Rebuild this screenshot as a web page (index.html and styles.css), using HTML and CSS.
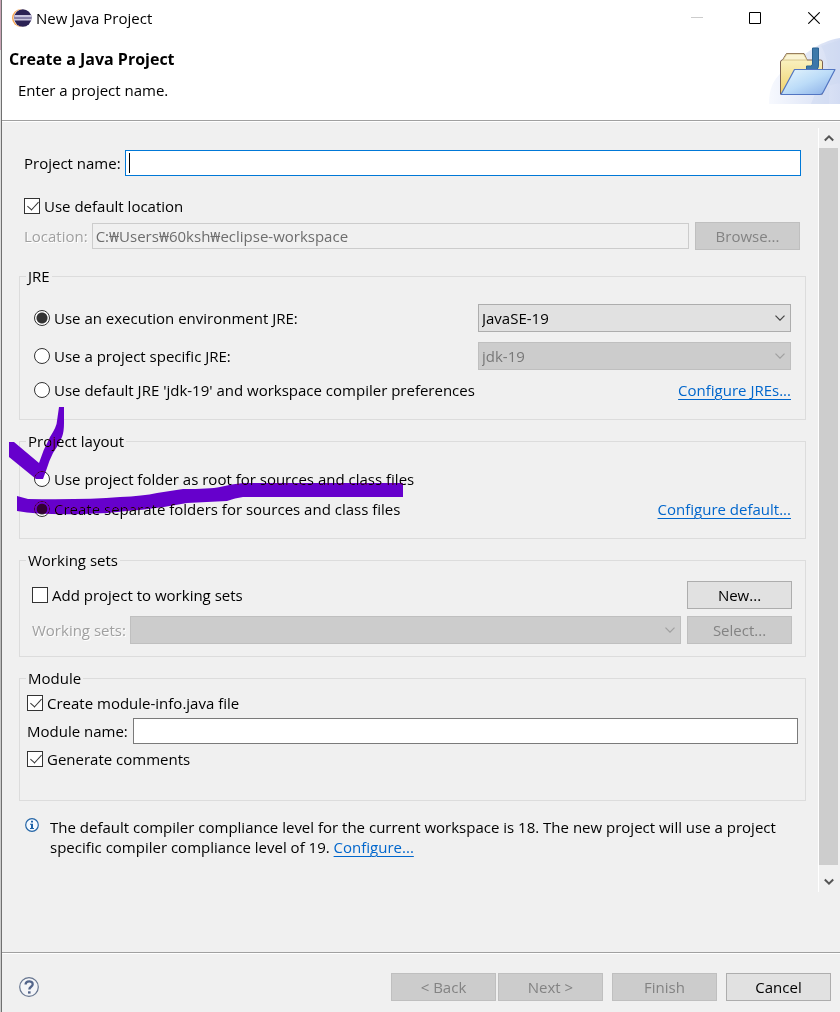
FILE: index.html
```html
<!DOCTYPE html>
<html lang="en">
<head>
  <meta charset="UTF-8" />
  <meta name="viewport" content="width=device-width, initial-scale=1" />
  <title>New Java Project</title>
  <link rel="stylesheet" href="styles.css">
</head>
<body>

  <div class="dialog">
    <div class="titlebar">
      <svg class="logo" width="20" height="20" viewBox="0 0 20 20">
        <circle cx="9" cy="10" r="9" fill="#f7a550" />
        <circle cx="10.500" cy="10" r="9" fill="#fff" />
        <circle cx="10.800" cy="10" r="8.700" fill="#2c2255" />
        <path d="M2.300 8h17M2 11.500h17.500" stroke="#c9c4de" stroke-width="1.800" />
        <path d="M2 9.800h17.500" stroke="#8c85b0" stroke-width="1.500" />
      </svg>
      <span class="window-title">New Java Project</span>
      <div class="window-buttons">
        <button aria-label="Minimize" disabled>
          <svg width="12" height="12" viewBox="0 0 12 12"><path d="M0 5.500h12" stroke="#ccc" /></svg>
        </button>
        <button aria-label="Maximize">
          <svg width="12" height="12" viewBox="0 0 12 12"><path d="M.5.5h11v11H.5z" fill="none" stroke="#000" /></svg>
        </button>
        <button aria-label="Close">
          <svg width="12" height="12" viewBox="0 0 12 12"><path d="M.3.3l11.400 11.400M11.700.3L.3 11.700" stroke="#000" stroke-width="1.100" /></svg>
        </button>
      </div>
    </div>

    <header class="header">
      <div>
        <h1>Create a Java Project</h1>
        <p>Enter a project name.</p>
      </div>
      <svg class="banner" width="71" height="68" viewBox="0 0 71 68">
        <defs>
          <linearGradient id="glow" x1="0" x2="1"><stop offset="0" stop-color="#f7f9fe" /><stop offset="1" stop-color="#d3dcf3" /></linearGradient>
          <linearGradient id="back" x1="0" y1="0" x2="0" y2="1"><stop offset="0" stop-color="#fbf6cf" /><stop offset="1" stop-color="#f0d26a" /></linearGradient>
          <linearGradient id="front" x1="0" y1="0" x2="1" y2="1"><stop offset="0" stop-color="#e8f6fd" /><stop offset=".5" stop-color="#bcdcf8" /><stop offset="1" stop-color="#86abe6" /></linearGradient>
        </defs>
        <path d="M0 68C0 48 8 38 22 30C36 18 48 6 71 2V68z" fill="url(#glow)" />
        <path d="M52 10Q62 24 60 68H71V4zM46 58Q60 48 71 47V68H42z" fill="#cbd6f1" opacity=".4" />
        <path d="M11.500 58V26q0-2 2-2l4-6.500h17.500l3 6.500h13.500q2 0 2 2v32z" fill="url(#back)" stroke="#7e6250" />
        <path d="M14 24l4-6h16.500l3.500 6z" fill="#faf4d4" stroke="#c8b475" stroke-width=".7" />
        <path d="M43.500 12h6v17q0 6-6 6h-6v-5h4q2 0 2-2z" fill="#3d78aa" stroke="#2b6291" />
        <path d="M25.500 33.500h40.500l-12 23q-1 2-3 2H12z" fill="url(#front)" stroke="#5275c2" stroke-width="1.200" stroke-linejoin="round" />
      </svg>
    </header>

    <main class="content">
      <form class="form">
        <div class="row project-name">
          <label for="projectName">Project name:</label>
          <input type="text" id="projectName" class="active" />
        </div>
        <label class="option default-location"><input type="checkbox" checked /> Use default location</label>
        <div class="row location">
          <label for="location" class="disabled">Location:</label>
          <input type="text" id="location" value="C:₩Users₩60ksh₩eclipse-workspace" disabled />
          <button type="button" class="button" disabled>Browse...</button>
        </div>

        <fieldset class="spaced">
          <legend>JRE</legend>
          <div class="row">
            <label class="option"><input type="radio" name="jre" checked /> Use an execution environment JRE:</label>
            <div class="select jre-select">
              <select aria-label="Execution environment"><option>JavaSE-19</option></select>
              <svg width="10" height="6" viewBox="0 0 10 6"><path d="M.5.7L5 5.200 9.500.7" /></svg>
            </div>
          </div>
          <div class="row">
            <label class="option"><input type="radio" name="jre" /> Use a project specific JRE:</label>
            <div class="select jre-select">
              <select aria-label="Project JRE" disabled><option>jdk-19</option></select>
              <svg width="10" height="6" viewBox="0 0 10 6"><path d="M.5.7L5 5.200 9.500.7" /></svg>
            </div>
          </div>
          <div class="row">
            <label class="option"><input type="radio" name="jre" /> Use default JRE 'jdk-19' and workspace compiler preferences</label>
            <a href="#">Configure JREs...</a>
          </div>
        </fieldset>

        <fieldset class="spaced marked">
          <legend>Project layout</legend>
          <div class="row">
            <label class="option"><input type="radio" name="layout" /> Use project folder as root for sources and class files</label>
          </div>
          <div class="row">
            <label class="option"><input type="radio" name="layout" checked /> Create separate folders for sources and class files</label>
            <a href="#">Configure default...</a>
          </div>
          <!-- hand-drawn tick and underline -->
          <svg class="marker" width="400" height="112" viewBox="7 405 400 112">
            <path d="M9 442H14L39 463Q43 450 50 437Q57 426 57 421L59 407H64V423Q64 432 62 437Q58 446 53 453Q49 461 47 468L43 479H36L9 457z" />
            <path d="M17 496L28 499Q85 500 120 497Q143 496 157 493L183 489Q210 489 220 487Q232 484 243 483H403V497H243Q235 498 227 501Q207 502 187 503Q157 509 127 511Q105 514 83 514Q40 515 17 511z" />
          </svg>
        </fieldset>

        <fieldset class="working-sets">
          <legend>Working sets</legend>
          <div class="row">
            <label class="option"><input type="checkbox" /> Add project to working sets</label>
            <button type="button" class="button">New...</button>
          </div>
          <div class="row">
            <label for="workingSets" class="disabled">Working sets:</label>
            <div class="select">
              <select id="workingSets" disabled></select>
              <svg width="10" height="6" viewBox="0 0 10 6"><path d="M.5.7L5 5.200 9.500.7" /></svg>
            </div>
            <button type="button" class="button" disabled>Select...</button>
          </div>
        </fieldset>

        <fieldset class="module">
          <legend>Module</legend>
          <label class="option"><input type="checkbox" checked /> Create module-info.java file</label>
          <div class="row">
            <label for="moduleName">Module name:</label>
            <input type="text" id="moduleName" />
          </div>
          <label class="option"><input type="checkbox" checked /> Generate comments</label>
        </fieldset>

        <div class="info">
          <svg width="14" height="14" viewBox="0 0 14 14">
            <circle cx="7" cy="7" r="6.300" fill="#f4f9ff" stroke="#2465a6" stroke-width="1.200" />
            <path d="M6 2.700h2v1.800H6zM5 5.700h3v4.300h1v1H5v-1h1V6.700H5z" fill="#1c62a8" />
          </svg>
          <p>The default compiler compliance level for the current workspace is 18. The new project will use a project specific compiler compliance level of 19. <a href="#">Configure...</a></p>
        </div>
      </form>

      <div class="scrollbar">
        <button type="button" aria-label="Scroll up"><svg width="10" height="8" viewBox="0 0 10 8"><path d="M.8 6.500L5 2.300l4.200 4.200" /></svg></button>
        <div class="thumb"></div>
        <button type="button" aria-label="Scroll down"><svg width="10" height="8" viewBox="0 0 10 8"><path d="M.8 1.500L5 5.700l4.200-4.200" /></svg></button>
      </div>
    </main>

    <footer class="footer">
      <button type="button" class="help" aria-label="Help">
        <svg width="20" height="20" viewBox="0 0 20 20">
          <circle cx="10" cy="10" r="9.300" fill="#f4f5f8" stroke="#66758f" stroke-width="1.200" />
          <path d="M6.600 7.600C6.600 3.300 13.700 3.400 13.700 7.200C13.700 9.800 10.300 9.700 10.300 12.600" fill="none" stroke="#53658a" stroke-width="2.300" />
          <path d="M9 14.300h2.600v2.300H9z" fill="#53658a" />
        </svg>
      </button>
      <div class="pair">
        <button type="button" class="button" disabled>&lt; Back</button>
        <button type="button" class="button" disabled>Next &gt;</button>
      </div>
      <button type="button" class="button" disabled>Finish</button>
      <button type="button" class="button">Cancel</button>
    </footer>
  </div>

</body>
</html>
```
FILE: styles.css
```css
* {
  box-sizing: border-box;
}
body {
  margin: 0;
  padding-left: 1px;
  /* strip of the window behind the dialog */
  background: linear-gradient(#c9a3b5 0 50px, #ddd 50px 480px, #bbb 480px 700px, #ccc 700px);
  font-family: "Open Sans", "Noto Sans", sans-serif;
  font-size: 15px;
  line-height: 20px;
  color: #000;
}
h1, p {
  margin: 0;
}
button, input, select {
  font: inherit;
  color: inherit;
}
a {
  color: #0066cc;
  text-underline-offset: 3px;
}
.dialog {
  display: flex;
  flex-direction: column;
  min-height: 100vh;
  border-left: 1px solid #707070;
  background: #f0f0f0;
}
.titlebar {
  display: flex;
  align-items: center;
  height: 36px;
  padding-left: 10px;
  background: #fff;
}
.window-title {
  flex: 1;
  padding-left: 4px;
}
.window-buttons {
  display: flex;
}
.window-buttons button {
  display: flex;
  align-items: center;
  justify-content: center;
  width: 58px;
  height: 36px;
  padding: 0;
  border: none;
  background: none;
}
.window-buttons button:last-child {
  width: 56px;
  padding-left: 4px;
}
.header {
  display: flex;
  justify-content: space-between;
  height: 85px;
  padding-left: 7px;
  border-bottom: 1px solid #a0a0a0;
  background: #fff;
}
.header h1 {
  padding-top: 13px;
  font-size: 16px;
  line-height: 20px;
}
.header p {
  padding: 11px 0 0 9px;
}
.content {
  display: flex;
  flex: 1;
  align-items: flex-start;
  padding: 6px 2px 0 0;
  border-top: 1px solid #fff;
}
.form {
  flex: 1;
  padding: 22px 12px 0 17px;
}
.row {
  display: flex;
  align-items: center;
}
.row .option {
  flex: 1;
}
.option {
  display: flex;
  align-items: center;
  gap: 4px;
}
.project-name {
  gap: 4px;
  padding: 0 5px;
}
.default-location {
  padding: 20px 5px 6px;
}
.location {
  gap: 6px;
  padding: 0 6px 0 5px;
  margin-bottom: 16px;
}
.location input {
  margin-left: -2px;
}
.disabled {
  color: #a0a0a0;
  text-shadow: 1px 1px #fff;
}
input[type="text"] {
  flex: 1;
  min-width: 0;
  height: 26px;
  padding: 0 3px;
  border: 1px solid #7a7a7a;
  background: #fff;
}
input[type="text"].active {
  border-color: #0078d7;
  /* text cursor */
  background: linear-gradient(#000, #000) 3px 2px / 1px 20px no-repeat #fff;
  outline: none;
}
input[type="text"]:disabled {
  border-color: #ccc;
  background: #f0f0f0;
  color: #6d6d6d;
}
input[type="radio"], input[type="checkbox"] {
  appearance: none;
  flex: none;
  width: 16px;
  height: 16px;
  margin: 0;
  border: 1px solid #333;
  background: #fff;
}
input[type="radio"] {
  border-radius: 50%;
}
input[type="radio"]:checked {
  background: radial-gradient(circle, #333 5px, #fff 6px);
}
input[type="checkbox"]:checked::before {
  content: "";
  display: block;
  width: 5px;
  height: 10px;
  margin: 0 0 0 5px;
  border: solid #333;
  border-width: 0 1px 1px 0;
  transform: rotate(42deg);
}
fieldset {
  display: flex;
  flex-direction: column;
  min-width: 0;
  margin: 0 0 11px;
  border: 1px solid #dcdcdc;
}
legend {
  padding: 0 2px;
}
.spaced {
  gap: 10px;
  padding: 18px 14px 19px;
}
.spaced legend {
  margin-left: -8px;
}
.marked {
  position: relative;
}
.working-sets {
  gap: 7px;
  padding: 11px 13px 12px 12px;
}
.working-sets legend {
  margin-left: -6px;
}
.working-sets .select {
  flex: 1;
  margin: 0 6px 0 4px;
}
.module {
  gap: 5px;
  padding: 5px 7px 31px;
}
.module legend {
  margin-left: -1px;
}
.module .row {
  gap: 5px;
}
.select {
  display: flex;
  align-items: center;
}
.jre-select {
  flex: 0 0 313px;
}
.select select {
  appearance: none;
  width: 100%;
  height: 28px;
  padding: 0 20px 0 3px;
  border: 1px solid #adadad;
  border-radius: 0;
  background: #e1e1e1;
}
.select svg {
  flex: none;
  margin-left: -16px;
  margin-right: 6px;
  fill: none;
  stroke: #444;
  stroke-width: 1.2;
  pointer-events: none;
}
.select select:disabled {
  border-color: #bfbfbf;
  background: #ccc;
  color: #787878;
  opacity: 1;
}
.select select:disabled + svg {
  stroke: #a0a0a0;
}
.button {
  flex: none;
  width: 105px;
  height: 28px;
  padding: 0;
  border: 1px solid #adadad;
  background: #e1e1e1;
}
.button:disabled {
  border-color: #bfbfbf;
  background: #ccc;
  color: #838383;
}
.marker {
  position: absolute;
  top: -46px;
  left: -13px;
  fill: #6600cc;
  mix-blend-mode: darken;
  pointer-events: none;
}
.info {
  display: flex;
  gap: 11px;
  padding: 5px 10px 0 6px;
}
.info svg {
  flex: none;
  margin-top: 1px;
}
.scrollbar {
  display: flex;
  flex-direction: column;
  width: 20px;
  height: 764px;
  border-left: 1px solid #fff;
}
.scrollbar button {
  display: flex;
  justify-content: center;
  height: 27px;
  padding: 13px 0 0;
  border: none;
  background: none;
}
.scrollbar button:first-child {
  height: 20px;
  padding-top: 6px;
}
.scrollbar path {
  fill: none;
  stroke: #555;
  stroke-width: 2;
}
.thumb {
  flex: 1;
  background: #cdcdcd;
}
.footer {
  display: flex;
  align-items: center;
  gap: 9px;
  padding: 20px 9px 11px 17px;
  border-top: 1px solid #a0a0a0;
  box-shadow: inset 0 1px #fff;
}
.help {
  display: flex;
  margin-right: auto;
  padding: 0;
  border: none;
  background: none;
}
.pair {
  display: flex;
  gap: 2px;
}
```
